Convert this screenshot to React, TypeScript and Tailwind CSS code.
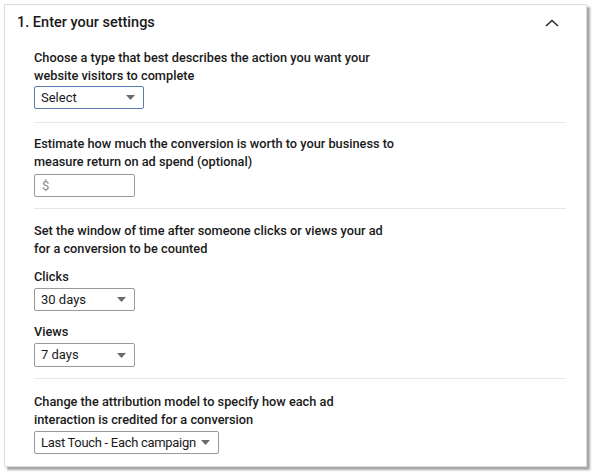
import type { ReactNode } from "react";

function Caret() {
  return (
    <svg width="9" height="5" viewBox="0 0 9 5" className="shrink-0">
      <path d="M0 0h9L4.5 5z" fill="#6b6b6b" />
    </svg>
  );
}

function SelectBox({
  label,
  width,
  height = "h-[23px]",
  focused = false,
  tight = false,
}: {
  label: string;
  width: string;
  height?: string;
  focused?: boolean;
  tight?: boolean;
}) {
  return (
    <div
      className={`flex items-center justify-between whitespace-nowrap rounded-[2px] border bg-white pl-[6px] pr-[8px] text-[13px] text-[#1a1a1a] ${width} ${height} ${
        focused ? "border-[#5a7bb0]" : "border-[#9a9a9a]"
      }`}
    >
      <span className={tight ? "tracking-[-0.3px]" : ""}>{label}</span>
      <Caret />
    </div>
  );
}

function Question({ children }: { children: ReactNode }) {
  return (
    <p className="text-[12.75px] font-medium leading-[18px] text-[#1a1a1a]">
      {children}
    </p>
  );
}

export default function App() {
  return (
    <div
      className="h-[475px] w-[597px] bg-white pl-[4px] pt-[4px]"
      style={{ fontFamily: 'Roboto, "Liberation Sans", Arial, sans-serif' }}
    >
      <div className="h-[463px] w-[583px] border border-[#dcdcdc] bg-white shadow-[3px_3px_2px_rgba(0,0,0,0.35)]">
        <div className="flex items-center justify-between pl-[12px] pr-[27px] pt-[8px]">
          <h1 className="text-[14.5px] font-medium leading-[20px] text-[#1a1a1a]">
            1. Enter your settings
          </h1>
          <svg width="14" height="8" viewBox="0 0 14 8">
            <path
              d="M1 7l6-5.5L13 7"
              fill="none"
              stroke="#2b2b2b"
              strokeWidth="1.6"
            />
          </svg>
        </div>

        <div className="pl-[29px] pr-[20px]">
          <div className="border-b border-[#e6e6e6] pb-[13px] pt-[16px]">
            <Question>
              Choose a type that best describes the action you want your
              <br />
              website visitors to complete
            </Question>
            <div className="mt-[1px]">
              <SelectBox label="Select" width="w-[110px]" focused />
            </div>
          </div>

          <div className="border-b border-[#e6e6e6] pb-[11px] pt-[12px]">
            <Question>
              Estimate how much the conversion is worth to your business to
              <br />
              measure return on ad spend (optional)
            </Question>
            <div className="mt-[3px] flex h-[23px] w-[101px] items-center rounded-[2px] border border-[#9a9a9a] pl-[7px] text-[13px] text-[#8a8a8a]">
              $
            </div>
          </div>

          <div className="border-b border-[#e6e6e6] pb-[11px] pt-[13px]">
            <Question>
              Set the window of time after someone clicks or views your ad
              <br />
              for a conversion to be counted
            </Question>
            <p className="mt-[10px] text-[12.75px] font-medium leading-[18px] text-[#1a1a1a]">
              Clicks
            </p>
            <div className="mt-[2px]">
              <SelectBox label="30 days" width="w-[101px]" />
            </div>
            <p className="mt-[12px] text-[12.75px] font-medium leading-[18px] text-[#1a1a1a]">
              Views
            </p>
            <div className="mt-[2px]">
              <SelectBox label="7 days" width="w-[101px]" height="h-[24px]" />
            </div>
          </div>

          <div className="pt-[14px]">
            <Question>
              Change the attribution model to specify how each ad
              <br />
              interaction is credited for a conversion
            </Question>
            <div className="mt-[2px]">
              <SelectBox
                label="Last Touch - Each campaign"
                width="w-[185px]"
                tight
              />
            </div>
          </div>
        </div>
      </div>
    </div>
  );
}
